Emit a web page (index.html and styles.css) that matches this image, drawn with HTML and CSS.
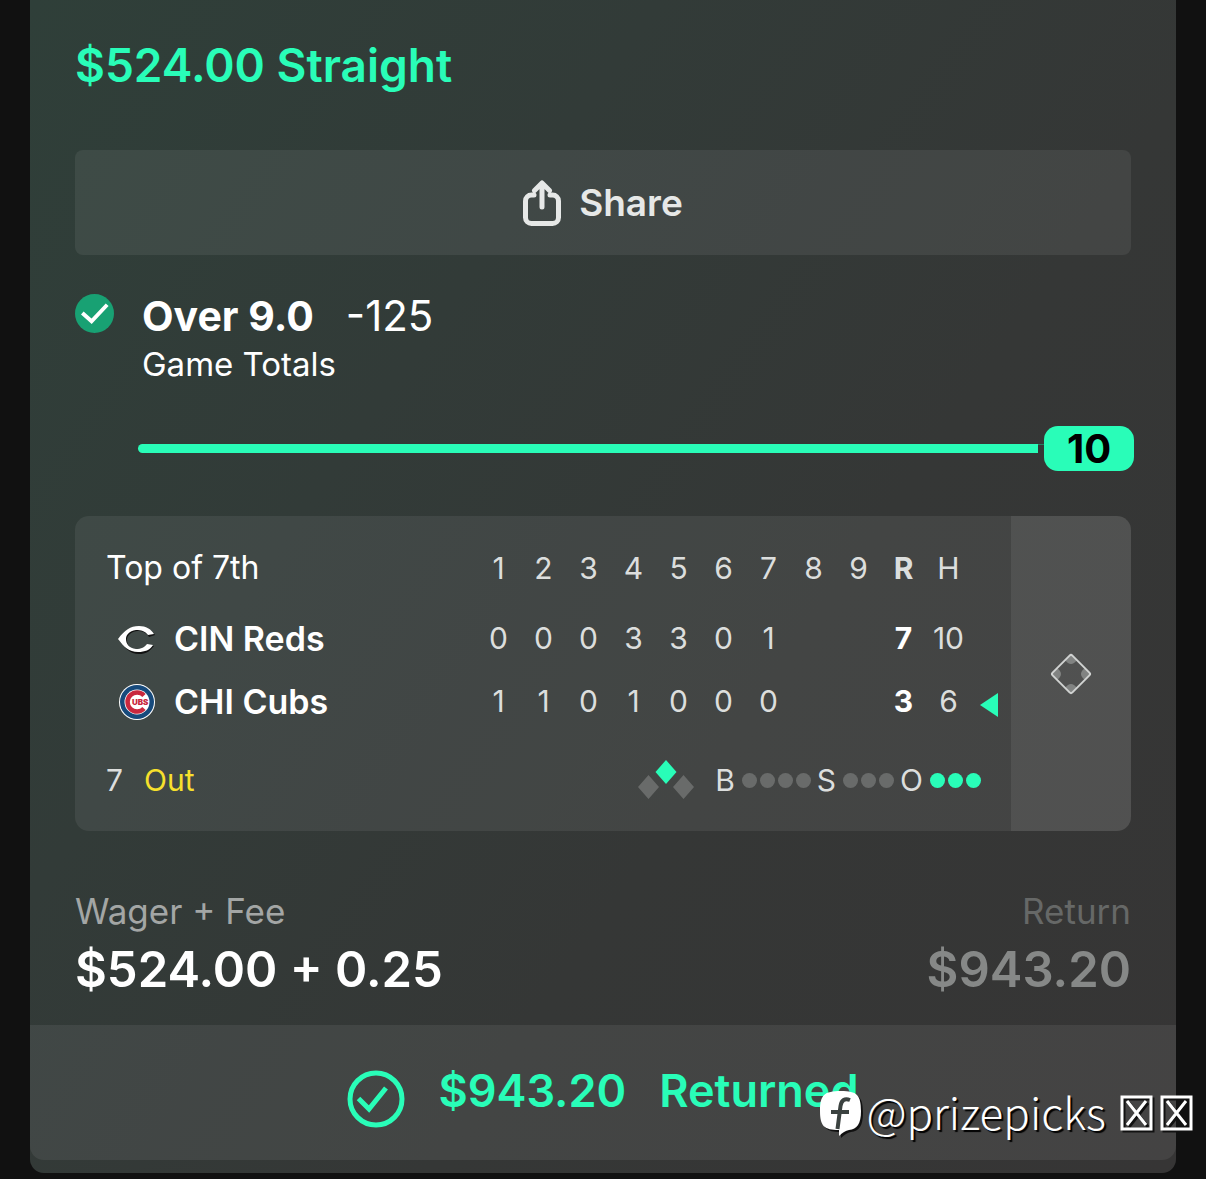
FILE: index.html
```html
<!DOCTYPE html>
<html lang="en">
<head>
<meta charset="utf-8">
<meta name="viewport" content="width=device-width, initial-scale=1">
<title>Bet slip</title>
<link rel="stylesheet" href="styles.css">
</head>
<body>
<main class="slip">
  <div class="slip-body">
    <h1 class="title">$524.00 Straight</h1>
    <button class="share" type="button">
      <svg class="share-icon" viewBox="0 0 38 46" aria-hidden="true"><path d="M11 15H8.500A6 6 0 0 0 2.500 21V37.500A6 6 0 0 0 8.500 43.500H29.500A6 6 0 0 0 35.500 37.500V21A6 6 0 0 0 29.500 15H27M19 27V4M11.500 10.500L19 3L26.500 10.500"/></svg>
      <span>Share</span>
    </button>

    <section class="pick">
      <svg class="pick-icon" viewBox="0 0 40 40" aria-hidden="true"><circle cx="20" cy="20" r="20"/><path d="M7.500 19.500L17 28L33 11"/></svg>
      <div>
        <h2 class="pick-name"><span>Over 9.0</span><span class="odds">-125</span></h2>
        <p class="pick-market">Game Totals</p>
      </div>
    </section>

    <div class="progress"><div class="track"></div><div class="track-end"></div><strong class="total">10</strong></div>

    <section class="board">
      <div class="board-main">
        <table class="score">
          <thead>
            <tr><th class="team inning" scope="col">Top of 7th</th><th>1</th><th>2</th><th>3</th><th>4</th><th>5</th><th>6</th><th>7</th><th>8</th><th>9</th><th class="bold">R</th><th>H</th><td class="turn"></td></tr>
          </thead>
          <tbody>
            <tr>
              <th class="team" scope="row"><div class="team-line"><svg class="logo" viewBox="0 0 38 38" aria-hidden="true"><path d="M1 20C8 11 13 7 22 7C29 7 34 10 37 15L31 17C28 12 24 11 19 11C12 12 9 16 9 20C9 25 12 29 19 30C24 30 28 28 30 25L36 26C31 32 28 34 21 34C12 34 7 28 1 20Z" fill="#111"/><path d="M0 19C7 10 12 6 21 6C28 6 33 9 36 14L30 15C27 11 23 10 18 10C11 11 8 15 8 19C8 24 11 28 18 29C23 29 27 27 29 24L35 25C32 30 27 32 20 32C11 32 6 27 0 19Z" fill="#fff"/></svg>CIN Reds</div></th>
              <td>0</td><td>0</td><td>0</td><td>3</td><td>3</td><td>0</td><td>1</td><td></td><td></td><td class="bold">7</td><td>10</td><td class="turn"></td>
            </tr>
            <tr>
              <th class="team" scope="row"><div class="team-line"><svg class="logo" viewBox="0 0 38 38" aria-hidden="true"><circle cx="19" cy="19" r="18" fill="#fff"/><circle cx="19" cy="19" r="17" fill="#174a7c"/><circle cx="19" cy="19" r="12.500" fill="#fff"/><path d="M26 12.500A9.500 9.500 0 1 0 26 25.500" fill="none" stroke="#c9283e" stroke-width="4.500"/><text class="logo-text" x="14" y="22">UBS</text></svg>CHI Cubs</div></th>
              <td>1</td><td>1</td><td>0</td><td>1</td><td>0</td><td>0</td><td>0</td><td></td><td></td><td class="bold">3</td><td>6</td><td class="turn"><svg class="arrow" viewBox="0 0 18 24" aria-hidden="true"><path d="M0 12L18 0V24Z"/></svg></td>
            </tr>
          </tbody>
        </table>
        <div class="status">
          <span>7</span><span class="out">Out</span>
          <svg class="bases" viewBox="0 0 56 40" aria-hidden="true"><path class="on" d="M28 0L38.500 12L28 24L17.500 12Z"/><path d="M10.500 15L21 27L10.500 39L0 27ZM45.500 15L56 27L45.500 39L35 27Z"/></svg>
          <div class="count"><span>B</span><i></i><i></i><i></i><i></i></div>
          <div class="count"><span>S</span><i></i><i></i><i></i></div>
          <div class="count lit"><span>O</span><i></i><i></i><i></i></div>
        </div>
      </div>
      <aside class="board-side">
        <svg class="field" viewBox="0 0 42 42" aria-hidden="true"><path class="corner" d="M15 7Q21 15 27 7L21 2ZM15 35Q21 27 27 35L21 40ZM7 15Q15 21 7 27L2 21ZM35 15Q27 21 35 27L40 21Z"/><rect x="7" y="7" width="28" height="28" rx="2" transform="rotate(45 21 21)"/></svg>
      </aside>
    </section>

    <dl class="money">
      <div><dt>Wager + Fee</dt><dd>$524.00 + 0.25</dd></div>
      <div class="dim"><dt>Return</dt><dd>$943.20</dd></div>
    </dl>
  </div>
  <footer class="result">
    <svg class="result-icon" viewBox="0 0 58 58" aria-hidden="true"><circle cx="29" cy="29" r="26"/><path d="M11.500 28.500L22 39L39 18"/></svg>
    <strong>$943.20</strong><strong>Returned</strong>
  </footer>
  <div class="watermark">
    <svg class="mark" viewBox="0 0 42 46" aria-hidden="true"><path fill="#fff" d="M21 0C37 0 41 4 41 20C41 33 37 38 29 39Q24 40 19 45V39C4 39 0 35 0 20C0 4 4 0 21 0Z"/><path d="M30 9Q22 6 20.500 15L17.500 38M11 21H29" fill="none" stroke="#3b4240" stroke-width="4"/></svg>
    <span>@prizepicks</span>
    <svg class="boxes" viewBox="0 0 74 38" aria-hidden="true"><path d="M2 2H31V34H2ZM7 6L26 30M26 6L7 30M42 2H71V34H42ZM47 6L66 30M66 6L47 30"/></svg>
  </div>
</main>
</body>
</html>
```
FILE: styles.css
```css
:root {
  --green: #29fdb8;
  --panel: rgba(255, 255, 255, 0.07);
}

* { box-sizing: border-box; }

body {
  margin: 0;
  background: #111;
  color: #fff;
  font-family: Inter, "Liberation Sans", sans-serif;
}

h1, h2, p, dl, dd { margin: 0; }

svg { display: block; flex: none; }

.slip {
  position: relative;
  margin: 0 30px;
  padding-bottom: 13px;
  border-radius: 0 0 14px 14px;
  background: linear-gradient(125deg, #2f3f39 0%, #323b38 32%, #353736 62%, #363535 100%);
}

.slip-body { padding: 35px 45px 25px; }

.title {
  color: var(--green);
  font-size: 46px;
  line-height: 60px;
  font-weight: 600;
}

.share {
  display: flex;
  align-items: center;
  justify-content: center;
  gap: 18px;
  width: 100%;
  height: 105px;
  margin-top: 55px;
  padding: 0;
  border: 0;
  border-radius: 8px;
  background: var(--panel);
  color: #e6e8e7;
  font: 600 37px/44px Inter, "Liberation Sans", sans-serif;
}

.share-icon {
  width: 38px;
  height: 46px;
  fill: none;
  stroke: #e6e8e7;
  stroke-width: 5;
  stroke-linecap: round;
  stroke-linejoin: round;
}

.pick {
  display: flex;
  gap: 28px;
  margin-top: 39px;
}

.pick-icon {
  width: 39px;
  height: 39px;
  fill: #18a173;
}

.pick-icon path {
  fill: none;
  stroke: #fff;
  stroke-width: 4;
}

.pick-name {
  display: flex;
  gap: 32px;
  font-size: 41px;
  line-height: 44px;
  font-weight: 700;
}

.odds {
  font-size: 42px;
  font-weight: 400;
}

.pick-market {
  margin-top: 4px;
  font-size: 33px;
  line-height: 44px;
}

.progress {
  display: flex;
  align-items: center;
  height: 45px;
  margin: 40px -3px 0 63px;
}

.track {
  flex: 1;
  height: 9px;
  border-radius: 5px 0 0 5px;
  background: var(--green);
}

.track-end {
  width: 6px;
  height: 9px;
  border-top: 1px solid #258063;
}

.total {
  width: 90px;
  border-radius: 14px;
  background: var(--green);
  color: #000;
  font-size: 40px;
  line-height: 45px;
  font-weight: 700;
  text-align: center;
}

.board {
  display: flex;
  margin-top: 45px;
  border-radius: 14px;
  overflow: hidden;
  background: var(--panel);
}

.board-main {
  flex: 1;
  padding: 20px 13px 0 31px;
}

.board-side {
  display: flex;
  align-items: center;
  justify-content: center;
  width: 120px;
  background: var(--panel);
}

.field {
  width: 42px;
  height: 42px;
  fill: none;
  stroke: #d0d2d1;
  stroke-width: 2;
}

.field .corner {
  fill: #818382;
  stroke: none;
}

.score {
  width: 100%;
  table-layout: fixed;
  border-collapse: collapse;
  color: #dcdedd;
  font-size: 30px;
  line-height: 36px;
}

.score th, .score td {
  width: 45px;
  height: 63px;
  padding: 0;
  text-align: center;
  font-weight: 400;
}

.score thead th {
  height: 70px;
  padding-bottom: 6px;
}

.score .team {
  width: auto;
  text-align: left;
  color: #fff;
}

.score .inning { font-size: 32px; }

.score .turn { width: 27px; }

.score .bold { font-weight: 700; }

.score tbody .bold { color: #fff; }

.team-line {
  display: flex;
  align-items: center;
  gap: 18px;
  padding: 3px 0 0 12px;
  font-size: 34px;
  font-weight: 600;
}

.logo {
  width: 38px;
  height: 38px;
}

.logo-text {
  fill: #c9283e;
  font-size: 8px;
  font-weight: 900;
}

.arrow {
  width: 18px;
  height: 24px;
  margin: 9px 0 0 9px;
  fill: var(--green);
}

.status {
  display: flex;
  align-items: center;
  height: 99px;
  padding: 0 17px 3px 0;
  color: #dcdedd;
  font-size: 30px;
  line-height: 36px;
}

.out {
  margin-left: 21px;
  color: #f7e02c;
}

.bases {
  width: 56px;
  height: 40px;
  margin: 0 21px 0 auto;
  fill: #696b6a;
}

.bases .on { fill: var(--green); }

.count {
  display: flex;
  align-items: center;
  gap: 3px;
  margin-left: 6px;
}

.bases + .count { margin-left: 0; }

.count span { margin-right: 4px; }

.count i {
  width: 15px;
  height: 15px;
  border-radius: 50%;
  background: #696b6a;
}

.count.lit i { background: var(--green); }

.money {
  display: flex;
  justify-content: space-between;
  margin-top: 57px;
}

.money dt {
  color: #a3a6a5;
  font-size: 35px;
  line-height: 46px;
}

.money dd {
  font-size: 49px;
  line-height: 60px;
  font-weight: 600;
  margin-top: 6px;
}

.money .dim { text-align: right; }

.money .dim dt { color: #666867; }

.money .dim dd { color: #868887; }

.result {
  display: flex;
  justify-content: center;
  gap: 33px;
  height: 135px;
  padding-top: 37px;
  border-radius: 0 0 14px 14px;
  background: var(--panel);
  color: var(--green);
  font-size: 45px;
  line-height: 58px;
}

.result strong { font-weight: 600; }

.result-icon {
  width: 58px;
  height: 58px;
  margin-top: 8px;
  fill: none;
  stroke: var(--green);
  stroke-width: 5;
}

.watermark {
  position: absolute;
  right: -18px;
  bottom: 27px;
  display: flex;
  align-items: center;
  font-family: "Noto Sans CJK SC", "Noto Sans", sans-serif;
  font-size: 44px;
  line-height: 60px;
  font-weight: 300;
  text-shadow: 2px 2px 1px #000;
}

.watermark span { padding-bottom: 5px; }

.watermark svg { filter: drop-shadow(2px 2px 0 #111); }

.mark {
  width: 42px;
  height: 46px;
  margin-right: 4px;
}

.boxes {
  width: 74px;
  height: 38px;
  margin-left: 14px;
  fill: none;
  stroke: #fff;
  stroke-width: 3;
}
```
